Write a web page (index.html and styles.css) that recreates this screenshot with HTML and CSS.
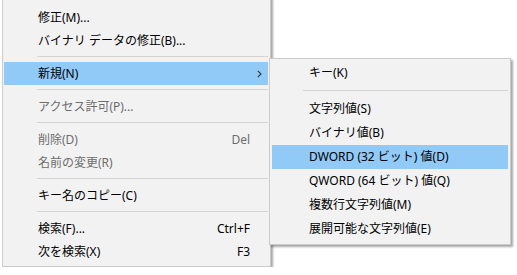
FILE: index.html
```html
<!doctype html>
<html lang="ja">
<head>
<meta charset="utf-8">
<title>コンテキスト メニュー</title>
<meta name="viewport" content="width=device-width, initial-scale=1">
<link rel="stylesheet" href="styles.css">
</head>
<body>

<ul class="menu">
  <li class="item">修正(M)...</li>
  <li class="item">バイナリ データの修正(B)...</li>
  <li class="sep"></li>
  <li class="item has-sub active">新規(N)
    <svg class="arrow" width="5" height="8" viewBox="0 0 5 8"><polyline points="0.8,0.8 4,4 0.8,7.2" fill="none" stroke="#333" stroke-width="1.1"/></svg>

    <!-- サブメニュー -->
    <ul class="menu submenu">
      <li class="item">キー(K)</li>
      <li class="sep"></li>
      <li class="item">文字列値(S)</li>
      <li class="item">バイナリ値(B)</li>
      <li class="item active">DWORD (32 ビット) 値(D)</li>
      <li class="item">QWORD (64 ビット) 値(Q)</li>
      <li class="item">複数行文字列値(M)</li>
      <li class="item">展開可能な文字列値(E)</li>
    </ul>
  </li>
  <li class="sep"></li>
  <li class="item disabled">アクセス許可(P)...</li>
  <li class="sep"></li>
  <li class="item disabled">削除(D)<span class="key">Del</span></li>
  <li class="item disabled">名前の変更(R)</li>
  <li class="sep"></li>
  <li class="item">キー名のコピー(C)</li>
  <li class="sep"></li>
  <li class="item">検索(F)...<span class="key">Ctrl+F</span></li>
  <li class="item">次を検索(X)<span class="key">F3</span></li>
</ul>

</body>
</html>
```

FILE: styles.css
```css
:root{
  --c-page:#fff;
  --c-menu:#f2f2f2;
  --c-border:#cbcbcb;
  --c-sep:#d4d4d4;
  --c-hover:#91c9f7;
  --c-text:#000;
  --c-off:#6d6d6d;
}
*{box-sizing:border-box;margin:0;padding:0;}
body{
  background:var(--c-page);
  color:var(--c-text);
  font-family:"Noto Sans","Noto Sans CJK JP",sans-serif;
  font-size:12px;
  overflow:hidden;
}
ul{list-style:none;}

.menu{
  width:269px;
  margin:-3px 0 0 2px;              /* 上端は画面外 */
  padding:8px 2px 3px 1px;
  background:var(--c-menu);
  border:1px solid var(--c-border);
  box-shadow:2px 2px 2px rgb(0 0 0 / .35);
}
.item{
  position:relative;
  height:23px;
  line-height:23px;
  padding:0 18px 0 34px;
  display:flex;
  justify-content:space-between;
  white-space:nowrap;
}
.item.active{background:var(--c-hover);}
.item.disabled{color:var(--c-off);}
.key{margin-left:auto;}
.sep{
  height:1px;
  margin:4px 0 5px 33px;
  background:var(--c-sep);
}
.arrow{position:absolute;right:6px;top:8px;}

/* サブメニュー */
.submenu{
  position:absolute;
  left:calc(100% + 1px);
  top:-4px;
  width:242px;
  margin:0;
  padding:2px 2px 3px 2px;
}
.submenu .item{
  height:24px;
  line-height:24px;
  padding-left:37px;
}
.submenu .sep{margin:5px 0 6px 31px;}
```
